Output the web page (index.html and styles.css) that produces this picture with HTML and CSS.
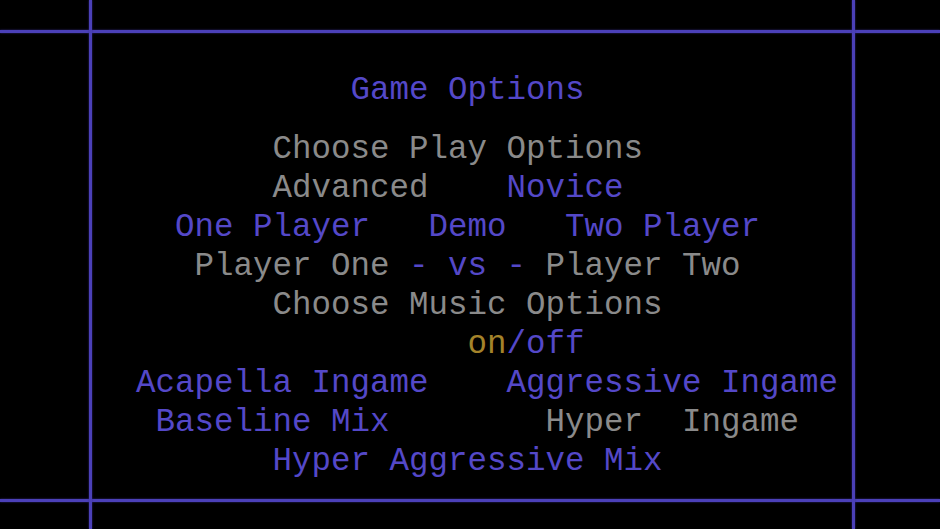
FILE: index.html
```html
<!DOCTYPE html>
<html lang="en">

<head>
    <meta charset="UTF-8">
    <meta name="viewport" content="width=device-width, initial-scale=1.0">
    <title>Game Options</title>
    <link rel="stylesheet" href="styles.css">
</head>

<body>
    <div class="screen">
        <div class="rule rule-top"></div>
        <div class="rule rule-bottom"></div>
        <div class="rule rule-left"></div>
        <div class="rule rule-right"></div>

        <!-- text mode menu, one line per row, columns padded with spaces -->
        <div class="menu">
            <p class="line title">           Game Options</p>
            <p class="line"><span class="dim">       Choose Play Options</span></p>
            <p class="line"><span class="dim">       Advanced</span>    Novice</p>
            <p class="line">  One Player   Demo   Two Player</p>
            <p class="line"><span class="dim">   Player One </span>- vs -<span class="dim"> Player Two</span></p>
            <p class="line"><span class="dim">       Choose Music Options</span></p>
            <p class="line">                 <span class="lit">on</span>/off</p>
            <p class="line">Acapella Ingame    Aggressive Ingame</p>
            <p class="line"> Baseline Mix        <span class="dim">Hyper  Ingame</span></p>
            <p class="line">       Hyper Aggressive Mix</p>
        </div>
    </div>
</body>

</html>
```

FILE: styles.css
```css
body {
    margin: 0;
    background-color: #000;
}

.screen {
    width: 940px;
    height: 529px;
    display: grid;
    grid-template-columns: 89px 3px 1fr 3px 85px;
    grid-template-rows: 30px 3px 1fr 3px 27px;
    overflow: hidden;
}

.rule {
    background-color: #4b40b8;
    box-shadow: 0 0 2px #3a3090;
}

.rule-top {
    grid-row: 2;
    grid-column: 1 / -1;
}

.rule-bottom {
    grid-row: 4;
    grid-column: 1 / -1;
}

.rule-left {
    grid-row: 1 / -1;
    grid-column: 2;
}

.rule-right {
    grid-row: 1 / -1;
    grid-column: 4;
}

.menu {
    grid-row: 3;
    grid-column: 3;
    padding: 38px 0 0 44px;
    font-family: "Liberation Mono", "DejaVu Sans Mono", monospace;
    font-size: 32.5px;
    line-height: 39px;
    color: #5448c8;
}

.line {
    margin: 0;
    white-space: pre;
}

.title {
    margin-bottom: 20px;
}

.dim {
    color: #8a8a8a;
}

.lit {
    color: #a4832a;
}
```
